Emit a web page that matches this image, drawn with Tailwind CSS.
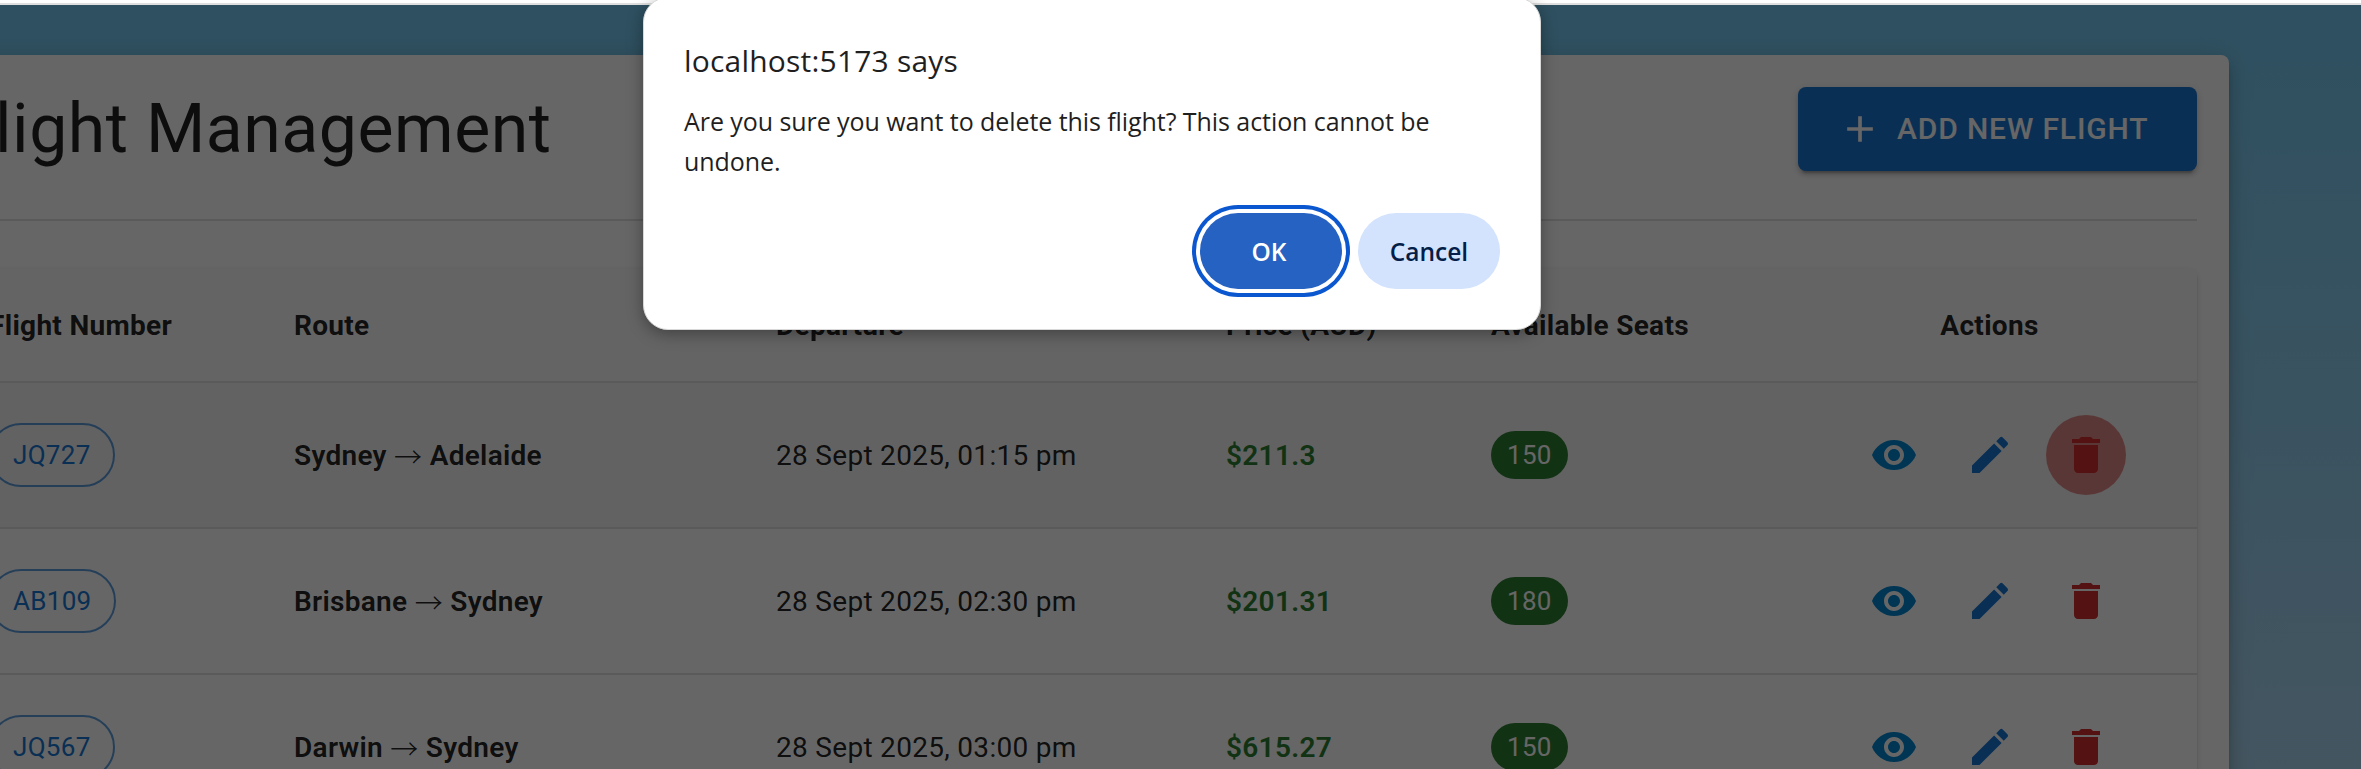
<!DOCTYPE html>
<html lang="en">
<head>
<meta charset="utf-8">
<title>Flight Management</title>
<script src="https://cdn.jsdelivr.net/npm/@tailwindcss/browser@4"></script>
</head>
<body class="relative h-[769px] w-[2361px] overflow-hidden bg-white font-['Roboto',sans-serif] text-black/87">
<svg class="hidden">
  <symbol id="eye" viewBox="0 0 24 24"><path d="M12 4.5C7 4.5 2.73 7.61 1 12c1.73 4.39 6 7.5 11 7.500s9.27-3.11 11-7.5c-1.730-4.39-6-7.5-11-7.5M12 17c-2.76 0-5-2.24-5-5s2.24-5 5-5 5 2.24 5 5-2.24 5-5 5m0-8c-1.66 0-3 1.34-3 3s1.34 3 3 3 3-1.34 3-3-1.34-3-3-3"/></symbol>
  <symbol id="edit" viewBox="0 0 24 24"><path d="M3 17.25V21h3.75L17.81 9.94l-3.75-3.75zM20.71 7.04c.39-.39.39-1.02 0-1.41l-2.34-2.34a.9959.9959 0 0 0-1.41 0l-1.83 1.83 3.75 3.75z"/></symbol>
  <symbol id="trash" viewBox="0 0 24 24"><path d="M6 19c0 1.1.9 2 2 2h8c1.1 0 2-.9 2-2V7H6zM19 4h-3.5l-1-1h-5l-1 1H5v2h14z"/></symbol>
</svg>

<div class="h-[5px] border-b-2 border-[#dfdfdf] bg-white"></div>

<div class="relative h-[764px] overflow-hidden bg-linear-to-b from-[#73c8f0] to-[#aad6f0] pt-[50px]">
  <main class="-ml-[75px] h-[900px] w-[2304px] rounded-lg bg-white p-8 shadow-[0_6px_6px_-2px_rgba(0,0,0,0.2),0_10px_16px_0_rgba(0,0,0,0.14),0_2px_28px_0_rgba(0,0,0,0.12)]">
    <div class="flex h-[84px] items-center justify-between">
      <h1 class="text-[68px] leading-[84px] tracking-[0.5px]">Flight Management</h1>
      <button class="flex h-[84px] w-[399px] items-center rounded-lg bg-[#1976d2] pl-10 text-[30px] font-medium tracking-[0.857px] whitespace-nowrap text-white shadow-[0_6px_2px_-4px_rgba(0,0,0,0.2),0_4px_4px_0_rgba(0,0,0,0.14),0_2px_10px_0_rgba(0,0,0,0.12)]">
        <svg class="mr-[15px] size-11 fill-current" viewBox="0 0 24 24"><path d="M19 13h-6v6h-2v-6H5v-2h6V5h2v6h6z"/></svg><span class="pb-0.5">ADD NEW FLIGHT</span>
      </button>
    </div>
    <hr class="mt-12 mb-12 border-t-2 border-[#e0e0e0]">
    <div class="h-[800px] w-[2240px] rounded-lg shadow-[0_4px_2px_-2px_rgba(0,0,0,0.2),0_2px_2px_0_rgba(0,0,0,0.14),0_2px_6px_0_rgba(0,0,0,0.12)]">
      <table class="w-[2240px] table-fixed border-separate border-spacing-0 text-left text-[28px] leading-10 tracking-[0.3px] [&_td]:border-b-2 [&_td]:border-[#e0e0e0] [&_td]:px-8 [&_td]:py-0 [&_th]:border-b-2 [&_th]:border-[#e0e0e0] [&_th]:px-8 [&_th]:pt-0.5 [&_th]:pb-0">
        <colgroup><col class="w-[305px]"><col class="w-[482px]"><col class="w-[450px]"><col class="w-[265px]"><col class="w-[323px]"><col class="w-[415px]"></colgroup>
        <thead>
          <tr class="h-[114px] bg-[#fafafa] font-semibold"><th>Flight Number</th><th>Route</th><th>Departure</th><th>Price (AUD)</th><th>Available Seats</th><th class="text-center">Actions</th></tr>
        </thead>
        <tbody>
          <tr class="h-[146px] bg-[#f5f5f5]">
            <td><span class="flex h-16 w-fit items-center rounded-full border-2 border-[#1976d2]/70 px-[22px] text-[26px] text-[#1976d2]">JQ727</span></td>
            <td class="font-semibold"><div class="pt-px">Sydney <span class="align-[-3px] font-['Noto_Sans_CJK_SC',sans-serif] leading-none font-light">→</span> Adelaide</div></td>
            <td><div class="pt-px">28 Sept 2025, 01:15 pm</div></td>
            <td class="font-semibold text-[#2e7d32]"><div class="pt-px">$211.3</div></td>
            <td><span class="flex h-12 w-fit items-center rounded-full bg-[#2e7d32] px-4 text-[26px] text-white">150</span></td>
            <td><div class="flex justify-center gap-4"><span class="p-4 text-[#0288d1]"><svg class="size-12 fill-current"><use href="#eye"/></svg></span><span class="p-4 text-[#1976d2]"><svg class="size-12 fill-current"><use href="#edit"/></svg></span><span class="rounded-full bg-[#e18b89] p-4 text-[#d32f2f]"><svg class="size-12 fill-current"><use href="#trash"/></svg></span></div></td>
          </tr>
          <tr class="h-[146px]">
            <td><span class="flex h-16 w-fit items-center rounded-full border-2 border-[#1976d2]/70 px-[22px] text-[26px] text-[#1976d2]">AB109</span></td>
            <td class="font-semibold"><div class="pt-px">Brisbane <span class="align-[-3px] font-['Noto_Sans_CJK_SC',sans-serif] leading-none font-light">→</span> Sydney</div></td>
            <td><div class="pt-px">28 Sept 2025, 02:30 pm</div></td>
            <td class="font-semibold text-[#2e7d32]"><div class="pt-px">$201.31</div></td>
            <td><span class="flex h-12 w-fit items-center rounded-full bg-[#2e7d32] px-4 text-[26px] text-white">180</span></td>
            <td><div class="flex justify-center gap-4"><span class="p-4 text-[#0288d1]"><svg class="size-12 fill-current"><use href="#eye"/></svg></span><span class="p-4 text-[#1976d2]"><svg class="size-12 fill-current"><use href="#edit"/></svg></span><span class="p-4 text-[#d32f2f]"><svg class="size-12 fill-current"><use href="#trash"/></svg></span></div></td>
          </tr>
          <tr class="h-[146px]">
            <td><span class="flex h-16 w-fit items-center rounded-full border-2 border-[#1976d2]/70 px-[22px] text-[26px] text-[#1976d2]">JQ567</span></td>
            <td class="font-semibold"><div class="pt-px">Darwin <span class="align-[-3px] font-['Noto_Sans_CJK_SC',sans-serif] leading-none font-light">→</span> Sydney</div></td>
            <td><div class="pt-px">28 Sept 2025, 03:00 pm</div></td>
            <td class="font-semibold text-[#2e7d32]"><div class="pt-px">$615.27</div></td>
            <td><span class="flex h-12 w-fit items-center rounded-full bg-[#2e7d32] px-4 text-[26px] text-white">150</span></td>
            <td><div class="flex justify-center gap-4"><span class="p-4 text-[#0288d1]"><svg class="size-12 fill-current"><use href="#eye"/></svg></span><span class="p-4 text-[#1976d2]"><svg class="size-12 fill-current"><use href="#edit"/></svg></span><span class="p-4 text-[#d32f2f]"><svg class="size-12 fill-current"><use href="#trash"/></svg></span></div></td>
          </tr>
        </tbody>
      </table>
    </div>
  </main>
  <div class="absolute inset-0 bg-black/60"></div>
</div>

<div role="dialog" class="absolute -top-[3px] left-[643px] flex h-[333px] w-[898px] flex-col rounded-[25px] border border-[#d8d8d8] bg-white px-10 pt-[41px] font-['Open_Sans',sans-serif] text-[#1f1f1f] shadow-[0_4px_16px_rgba(0,0,0,0.35)]">
  <h2 class="text-[30px] leading-[44px] font-medium tracking-[0.2px] whitespace-nowrap">localhost:5173 says</h2>
  <p class="mt-[18px] text-[25px] leading-10 tracking-[-0.07px] whitespace-nowrap">Are you sure you want to delete this flight? This action cannot be<br>undone.</p>
  <div class="absolute right-10 bottom-10 flex gap-4 text-[24.5px] font-semibold">
    <button class="h-[76px] w-[142px] rounded-full bg-[#2662c2] pt-0.5 pr-1 text-white ring-4 ring-[#0b57d0] ring-offset-4 ring-offset-white">OK</button>
    <button class="h-[76px] w-[142px] rounded-full bg-[#d3e3fd] pt-0.5 text-[#041e49]">Cancel</button>
  </div>
</div>
</body>
</html>
